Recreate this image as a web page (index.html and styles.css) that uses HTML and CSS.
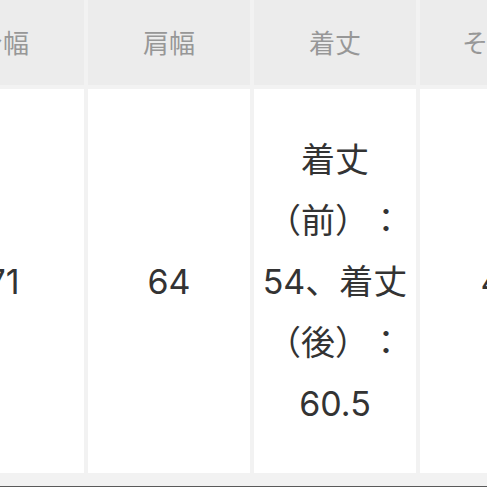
FILE: index.html
```html
<!DOCTYPE html>
<html lang="ja">
<head>
<meta charset="utf-8">
<link rel="stylesheet" href="styles.css">
</head>
<body>
<div class="frame">
  <div class="sheet">
    <div class="grid">
      <div class="th">身幅</div>
      <div class="th">肩幅</div>
      <div class="th">着丈</div>
      <div class="th">そで丈</div>
      <div class="td">71</div>
      <div class="td">64</div>
      <div class="td">着丈（前）：54、着丈（後）：60.5</div>
      <div class="td">47</div>
    </div>
  </div>
  <div class="bar"></div>
</div>
</body>
</html>
```

FILE: styles.css
```css
html, body {
  margin: 0;
  padding: 0;
  background: #f2f2f2;
}
.frame {
  width: 487px;
  height: 487px;
  overflow: hidden;
  display: flex;
  flex-direction: column;
  background: #f2f2f2;
  font-family: "Noto Sans CJK JP", "Noto Sans", sans-serif;
  text-spacing-trim: space-all;
}
.sheet {
  height: 486px;
  overflow: hidden;
}
.grid {
  margin-left: -78px;
  display: grid;
  grid-template-columns: repeat(4, 162px);
  grid-template-rows: 85px 384px;
  gap: 4px;
}
.th {
  background: #ececec;
  color: #979797;
  font-size: 26px;
  display: flex;
  align-items: center;
  justify-content: center;
  white-space: nowrap;
  padding-bottom: 3px;
}
.td {
  background: #ffffff;
  color: #333333;
  font-family: Inter, "Noto Sans CJK JP", sans-serif;
  font-size: 34px;
  line-height: 61px;
  display: flex;
  align-items: center;
  justify-content: center;
  text-align: center;
  padding: 0 6px;
  text-spacing-trim: space-all;
}
.bar {
  height: 1px;
  background: #5a5a5a;
}
```
